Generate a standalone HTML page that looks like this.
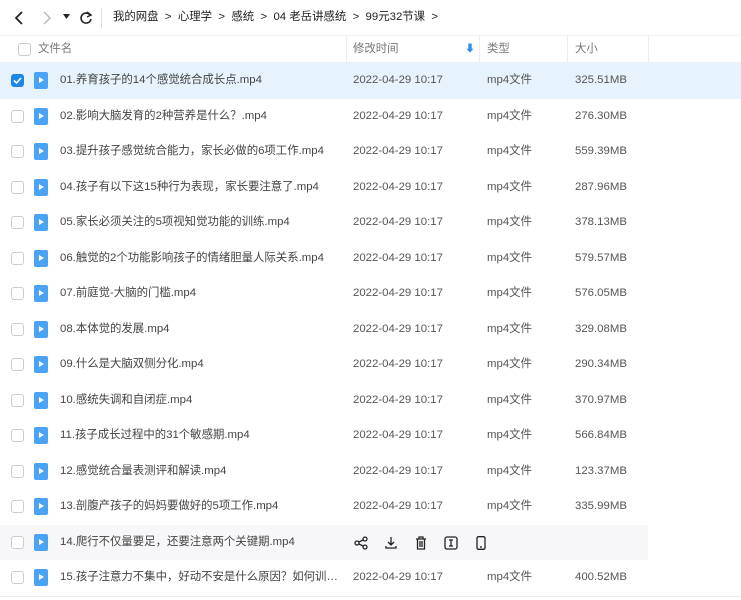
<!DOCTYPE html>
<html><head><meta charset="utf-8"><style>
*{margin:0;padding:0;box-sizing:border-box}
body{width:741px;height:600px;background:#fff;font-family:"Liberation Sans","Noto Sans CJK SC",sans-serif;color:#333;font-size:11.4px;overflow:hidden;position:relative}
.top{position:absolute;left:0;top:0;width:741px;height:35px}
.top span{position:absolute;top:0;line-height:35px;font-size:11.4px;color:#222;white-space:nowrap}
.hdr{position:absolute;top:35px;left:0;width:741px;height:28px;border-top:1px solid #f0f0f0;border-bottom:1px solid #f0f0f0}
.hdr span{position:absolute;top:0;line-height:27px;color:#777;font-size:11.4px}
.vl{position:absolute;top:0;width:1px;height:27px;background:#eee}
.row{position:absolute;left:0;height:35.5px;width:741px}
.row .cb{position:absolute;left:11px;top:11px;width:13px;height:13px;border:1px solid #ccc;border-radius:3px;background:#fff}
.row .ic{position:absolute;left:34px;top:9px;width:14px;height:17px;background:#4aa3f5;border-radius:2px}
.row .ic:after{content:"";position:absolute;left:5px;top:5px;border-left:5px solid #fff;border-top:3.5px solid transparent;border-bottom:3.5px solid transparent}
.row span{position:absolute;top:0;line-height:35px;height:35px;font-size:11.4px;color:#444;white-space:nowrap;overflow:hidden;text-overflow:ellipsis}
.n{left:60px;max-width:283px}.d{left:353px;color:#555!important}.t{left:487px;color:#555!important}.s{left:575px;color:#555!important}
</style></head><body>
<div class="top">
<svg style="position:absolute;left:12px;top:10px" width="14" height="16"><path d="M10 2 L4 8 L10 14" stroke="#222" stroke-width="1.8" fill="none"/></svg>
<svg style="position:absolute;left:40px;top:10px" width="14" height="16"><path d="M4 2 L10 8 L4 14" stroke="#bbb" stroke-width="1.5" fill="none"/></svg>
<svg style="position:absolute;left:63px;top:14px" width="8" height="6"><path d="M0 0 L7 0 L3.5 5Z" fill="#222"/></svg>
<svg style="position:absolute;left:79px;top:11px" width="14" height="14"><path d="M11 4 A5 5 0 1 0 12 8" stroke="#222" stroke-width="1.6" fill="none"/><path d="M8 1 L12 4 L8 6" stroke="#222" stroke-width="1.5" fill="none"/></svg>
<div style="position:absolute;left:101px;top:8px;width:1px;height:20px;background:#ddd"></div>
<span style="left:113px">我的网盘 &nbsp;&gt;&nbsp; 心理学 &nbsp;&gt;&nbsp; 感统 &nbsp;&gt;&nbsp; 04 老岳讲感统 &nbsp;&gt;&nbsp; 99元32节课 &nbsp;&gt;</span>
</div>
<div class="hdr">
<div style="position:absolute;left:18px;top:7px;width:13px;height:13px;border:1px solid #ccc;border-radius:3px"></div>
<span style="left:38px">文件名</span>
<div class="vl" style="left:346px"></div><span style="left:353px">修改时间</span>
<span style="left:465px;color:#2a8ef0;font-size:10px">&#x2B07;</span>
<div class="vl" style="left:479px"></div><span style="left:487px">类型</span>
<div class="vl" style="left:567px"></div><span style="left:575px">大小</span>
<div class="vl" style="left:648px"></div>
</div>
<div class="row" style="top:63px;background:#e6f2fc"><div class="cb" style="background:#1e88e8;border-color:#1e88e8"><svg width="11" height="11" style="position:absolute;left:0;top:0"><path d="M2 5.5 L4.5 8 L9 3" stroke="#fff" stroke-width="1.6" fill="none"/></svg></div><div class="ic"></div><span class="n">01.养育孩子的14个感觉统合成长点.mp4</span><span class="d">2022-04-29 10:17</span><span class="t">mp4文件</span><span class="s">325.51MB</span></div>
<div class="row" style="top:98.5px"><div class="cb"></div><div class="ic"></div><span class="n">02.影响大脑发育的2种营养是什么？.mp4</span><span class="d">2022-04-29 10:17</span><span class="t">mp4文件</span><span class="s">276.30MB</span></div>
<div class="row" style="top:134px"><div class="cb"></div><div class="ic"></div><span class="n">03.提升孩子感觉统合能力，家长必做的6项工作.mp4</span><span class="d">2022-04-29 10:17</span><span class="t">mp4文件</span><span class="s">559.39MB</span></div>
<div class="row" style="top:169.5px"><div class="cb"></div><div class="ic"></div><span class="n">04.孩子有以下这15种行为表现，家长要注意了.mp4</span><span class="d">2022-04-29 10:17</span><span class="t">mp4文件</span><span class="s">287.96MB</span></div>
<div class="row" style="top:205px"><div class="cb"></div><div class="ic"></div><span class="n">05.家长必须关注的5项视知觉功能的训练.mp4</span><span class="d">2022-04-29 10:17</span><span class="t">mp4文件</span><span class="s">378.13MB</span></div>
<div class="row" style="top:240.5px"><div class="cb"></div><div class="ic"></div><span class="n">06.触觉的2个功能影响孩子的情绪胆量人际关系.mp4</span><span class="d">2022-04-29 10:17</span><span class="t">mp4文件</span><span class="s">579.57MB</span></div>
<div class="row" style="top:276px"><div class="cb"></div><div class="ic"></div><span class="n">07.前庭觉-大脑的门槛.mp4</span><span class="d">2022-04-29 10:17</span><span class="t">mp4文件</span><span class="s">576.05MB</span></div>
<div class="row" style="top:311.5px"><div class="cb"></div><div class="ic"></div><span class="n">08.本体觉的发展.mp4</span><span class="d">2022-04-29 10:17</span><span class="t">mp4文件</span><span class="s">329.08MB</span></div>
<div class="row" style="top:347px"><div class="cb"></div><div class="ic"></div><span class="n">09.什么是大脑双侧分化.mp4</span><span class="d">2022-04-29 10:17</span><span class="t">mp4文件</span><span class="s">290.34MB</span></div>
<div class="row" style="top:382.5px"><div class="cb"></div><div class="ic"></div><span class="n">10.感统失调和自闭症.mp4</span><span class="d">2022-04-29 10:17</span><span class="t">mp4文件</span><span class="s">370.97MB</span></div>
<div class="row" style="top:418px"><div class="cb"></div><div class="ic"></div><span class="n">11.孩子成长过程中的31个敏感期.mp4</span><span class="d">2022-04-29 10:17</span><span class="t">mp4文件</span><span class="s">566.84MB</span></div>
<div class="row" style="top:453.5px"><div class="cb"></div><div class="ic"></div><span class="n">12.感觉统合量表测评和解读.mp4</span><span class="d">2022-04-29 10:17</span><span class="t">mp4文件</span><span class="s">123.37MB</span></div>
<div class="row" style="top:489px"><div class="cb"></div><div class="ic"></div><span class="n">13.剖腹产孩子的妈妈要做好的5项工作.mp4</span><span class="d">2022-04-29 10:17</span><span class="t">mp4文件</span><span class="s">335.99MB</span></div>
<div class="row" style="top:524.5px;width:648px;background:#f7f7f9"><div class="cb"></div><div class="ic"></div><span class="n">14.爬行不仅量要足，还要注意两个关键期.mp4</span>
<svg style="position:absolute;left:354px;top:11px" width="14" height="14" fill="none" stroke="#222" stroke-width="1.3"><circle cx="3" cy="7" r="2"/><circle cx="11" cy="3" r="2"/><circle cx="11" cy="11" r="2"/><path d="M5 6 L9 4 M5 8 L9 10"/></svg>
<svg style="position:absolute;left:384px;top:11px" width="14" height="14" fill="none" stroke="#222" stroke-width="1.3"><path d="M7 1 V9 M4 6 L7 9 L10 6 M2 10 V12 H12 V10"/></svg>
<svg style="position:absolute;left:414px;top:11px" width="14" height="14" fill="none" stroke="#222" stroke-width="1.3"><path d="M2 3 H12 M5 3 V1 H9 V3 M3.5 3 V13 H10.5 V3 M6 5 V11 M8 5 V11"/></svg>
<svg style="position:absolute;left:444px;top:11px" width="14" height="14" fill="none" stroke="#222" stroke-width="1.3"><rect x="1" y="1" width="12" height="12" rx="2"/><path d="M5 4 H9 M7 4 V10 M5 10 H9"/></svg>
<svg style="position:absolute;left:474px;top:11px" width="14" height="14" fill="none" stroke="#222" stroke-width="1.3"><rect x="3" y="0.7" width="8" height="12.6" rx="1.5"/><path d="M6 11 H8"/></svg>
</div>
<div class="row" style="top:560px"><div class="cb"></div><div class="ic"></div><span class="n">15.孩子注意力不集中，好动不安是什么原因？如何训练？如何训练</span><span class="d">2022-04-29 10:17</span><span class="t">mp4文件</span><span class="s">400.52MB</span></div>
<div style="position:absolute;left:0;top:596px;width:741px;height:1px;background:#eee"></div>
</body></html>
